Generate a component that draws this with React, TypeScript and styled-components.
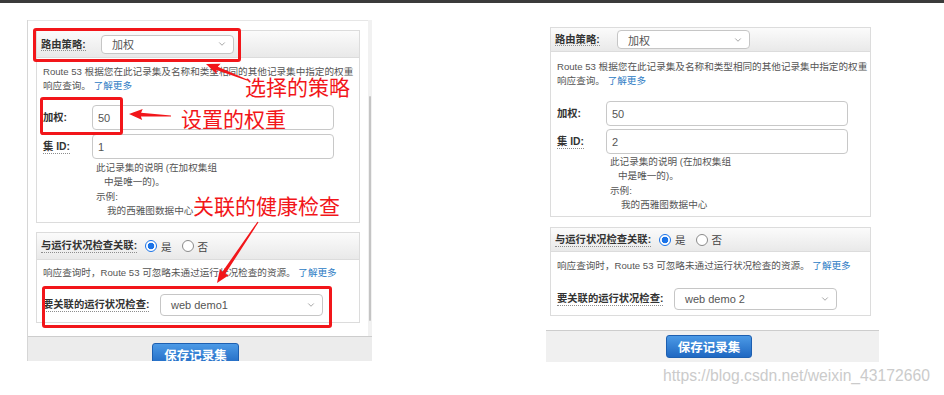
import React from "react";
import styled, { createGlobalStyle } from "styled-components";
import { ChevronDown } from "lucide-react";

const GlobalStyle = createGlobalStyle`
  html, body {
    margin: 0;
    padding: 0;
    background: #fff;
  }
  body {
    width: 944px;
    height: 395px;
    overflow: hidden;
    font-family: "Liberation Sans", "Noto Sans CJK SC", sans-serif;
  }
`;

interface Metrics {
  header: number;
  bodyTop: number;
  firstRow: number;
  secondRow: number;
  help: number;
  gap: number;
  body2Top: number;
  selectRow: number;
  body2Bottom: number;
}

const LEFT: Metrics = {
  header: 26,
  bodyTop: 7,
  firstRow: 12,
  secondRow: 4,
  help: 2,
  gap: 9,
  body2Top: 6,
  selectRow: 14,
  body2Bottom: 6,
};

const RIGHT: Metrics = {
  header: 23,
  bodyTop: 8,
  firstRow: 13,
  secondRow: 3,
  help: 1,
  gap: 10,
  body2Top: 7,
  selectRow: 15,
  body2Bottom: 5,
};

const Page = styled.div`
  position: relative;
  width: 944px;
  height: 395px;
`;

const TopBar = styled.div`
  height: 3px;
  background: #3b3b3b;
`;

const Stage = styled.div`
  display: flex;
  align-items: flex-start;
`;

/* left screenshot: framed, with a scrollbar */
const LeftShot = styled.div`
  margin: 17px 0 0 27px;
  width: 344px;
  border-left: 1px solid #d6d6d6;
  display: flex;
  flex-direction: column;
`;

const Viewport = styled.div`
  display: flex;
`;

const LeftContent = styled.div`
  flex: 1;
  border-top: 1px solid #e6e6e6;
  padding: 9px 8px 13px 8px;
`;

const ScrollTrack = styled.div`
  width: 5px;
  align-self: stretch;
  background: #f1f1f1;
`;

const ScrollThumb = styled.div`
  margin: 76px 1px 0;
  height: 225px;
  background: #c4c4c4;
  border-radius: 1px;
`;

/* right screenshot */
const RightShot = styled.div`
  margin: 24px 0 0 174px;
  width: 333px;
  display: flex;
  flex-direction: column;
`;

const RightContent = styled.div`
  padding: 0 8px 14px 4px;
`;

const Box = styled.div<{ $gap?: number }>`
  border: 1px solid #dcdcdc;
  background: #fff;
  margin-top: ${(p) => p.$gap ?? 0}px;
`;

const BoxHeader = styled.div<{ $h: number }>`
  height: ${(p) => p.$h}px;
  display: flex;
  align-items: center;
  padding-left: 4px;
  background: linear-gradient(#fbfbfb, #e9e9e9);
  border-bottom: 1px solid #dcdcdc;
`;

const Label = styled.span<{ $plain?: boolean }>`
  font-size: 10.3px;
  font-weight: 700;
  color: #333;
  line-height: 13px;
  white-space: nowrap;
  border-bottom: 1px dotted ${(p) => (p.$plain ? "transparent" : "#8d8d8d")};
  justify-self: start;
`;

const HeaderLabel = styled(Label)<{ $space: number }>`
  width: 58px;
  margin-right: ${(p) => p.$space}px;
  border-bottom: none;
  span {
    border-bottom: 1px dotted #8d8d8d;
  }
`;

const Select = styled.div<{ $w: number; $h: number }>`
  box-sizing: border-box;
  width: ${(p) => p.$w}px;
  height: ${(p) => p.$h}px;
  display: flex;
  align-items: center;
  justify-content: space-between;
  padding: 0 6px 0 10px;
  background: #fff;
  border: 1px solid #c6c6c6;
  border-radius: 4px;
  font-size: 11px;
  color: #555;
  svg {
    color: #888;
  }
`;

const Body = styled.div<{ $top: number; $bottom: number }>`
  padding: ${(p) => p.$top}px 6px ${(p) => p.$bottom}px 6px;
`;

const Desc = styled.div`
  font-size: 9.6px;
  line-height: 14px;
  color: #555;
  white-space: nowrap;
`;

const Link = styled.a`
  color: #2b7bc4;
  text-decoration: none;
`;

const FieldRow = styled.div<{ $top: number; $cols: string }>`
  display: grid;
  grid-template-columns: ${(p) => p.$cols};
  align-items: center;
  margin-top: ${(p) => p.$top}px;
`;

const TextInput = styled.input`
  box-sizing: border-box;
  width: 242px;
  height: 25px;
  margin: 0;
  padding: 0 5px;
  border: 1px solid #c8c8c8;
  border-radius: 4px;
  font-family: "Liberation Sans", sans-serif;
  font-size: 11px;
  color: #555;
  outline: none;
`;

const Help = styled.div<{ $top: number }>`
  margin-top: ${(p) => p.$top}px;
  padding-left: 53px;
  font-size: 9.6px;
  line-height: 14.3px;
  color: #555;
  white-space: nowrap;
`;

const HelpLine = styled.div<{ $indent?: number }>`
  padding-left: ${(p) => p.$indent ?? 0}px;
`;

const RadioGroup = styled.div`
  display: flex;
  align-items: center;
  margin-left: 8px;
`;

const RadioOption = styled.label`
  display: inline-flex;
  align-items: center;
  gap: 4px;
  margin-right: 10px;
  font-size: 10.5px;
  color: #444;
`;

const RadioDot = styled.span<{ $checked?: boolean }>`
  box-sizing: border-box;
  width: 12px;
  height: 12px;
  border-radius: 50%;
  border: 1px solid ${(p) => (p.$checked ? "#1a73e8" : "#8a8a8a")};
  background: ${(p) =>
    p.$checked ? "radial-gradient(circle, #1a73e8 0 3px, #fff 3.6px)" : "#fff"};
`;

const Footer = styled.div<{ $h: number; $pad: number; $shift: number; $bg: string }>`
  box-sizing: border-box;
  height: ${(p) => p.$h}px;
  padding-top: ${(p) => p.$pad}px;
  padding-right: ${(p) => p.$shift}px;
  display: flex;
  justify-content: center;
  overflow: hidden;
  background: ${(p) => p.$bg};
  border-top: 1px solid #cdcdcd;
`;

const SaveButton = styled.button<{ $w: number }>`
  box-sizing: border-box;
  flex: none;
  width: ${(p) => p.$w}px;
  height: 23px;
  padding: 0;
  border: 1px solid #1d5fb0;
  border-radius: 3px;
  background: linear-gradient(#4c9ae6, #1f68c2);
  color: #fff;
  font-family: "Liberation Sans", "Noto Sans CJK SC", sans-serif;
  font-size: 12.5px;
  font-weight: 700;
`;

const Watermark = styled.div`
  position: absolute;
  left: 663px;
  top: 367px;
  font-family: "Liberation Sans", sans-serif;
  font-size: 15.7px;
  color: #cbcbcb;
  white-space: nowrap;
`;

/* red annotations drawn over the left screenshot */
const RedBox = styled.div<{ $x: number; $y: number; $w: number; $h: number }>`
  position: absolute;
  left: ${(p) => p.$x}px;
  top: ${(p) => p.$y}px;
  width: ${(p) => p.$w}px;
  height: ${(p) => p.$h}px;
  box-sizing: border-box;
  border: 3px solid #f2161a;
  border-radius: 3px;
  pointer-events: none;
`;

const RedNote = styled.span<{ $x: number; $y: number }>`
  position: absolute;
  left: ${(p) => p.$x}px;
  top: ${(p) => p.$y}px;
  font-family: "Noto Sans CJK SC", sans-serif;
  font-size: 21px;
  line-height: 21px;
  color: #f2161a;
  white-space: nowrap;
`;

const ArrowLayer = styled.svg`
  position: absolute;
  left: 0;
  top: 0;
  pointer-events: none;
`;

function arrowPoints(x1: number, y1: number, x2: number, y2: number) {
  const len = Math.hypot(x2 - x1, y2 - y1);
  const dx = (x2 - x1) / len;
  const dy = (y2 - y1) / len;
  const nx = -dy;
  const ny = dx;
  const head = 12;
  const bx = x2 - dx * head;
  const by = y2 - dy * head;
  const pts: [number, number][] = [
    [x1 + nx * 0.6, y1 + ny * 0.6],
    [bx + nx * 1.8, by + ny * 1.8],
    [bx - dx * 1.5 + nx * 5.5, by - dy * 1.5 + ny * 5.5],
    [x2, y2],
    [bx - dx * 1.5 - nx * 5.5, by - dy * 1.5 - ny * 5.5],
    [bx - nx * 1.8, by - ny * 1.8],
    [x1 - nx * 0.6, y1 - ny * 0.6],
  ];
  return pts.map(([x, y]) => `${x.toFixed(1)},${y.toFixed(1)}`).join(" ");
}

function Chevron() {
  return <ChevronDown size={10} strokeWidth={1.8} />;
}

interface FormProps {
  m: Metrics;
  labelSpace: number;
  weight: string;
  setId: string;
  check: string;
}

function RecordForm({ m, labelSpace, weight, setId, check }: FormProps) {
  return (
    <>
      <Box>
        <BoxHeader $h={m.header}>
          <HeaderLabel $space={labelSpace}>
            <span>路由策略:</span>
          </HeaderLabel>
          <Select $w={133} $h={19}>
            加权
            <Chevron />
          </Select>
        </BoxHeader>
        <Body $top={m.bodyTop} $bottom={4}>
          <Desc>
            Route 53 根据您在此记录集及名称和类型相同的其他记录集中指定的权重
            <br />
            响应查询。 <Link>了解更多</Link>
          </Desc>
          <FieldRow $top={m.firstRow} $cols="49px 242px">
            <Label $plain>加权:</Label>
            <TextInput readOnly value={weight} />
          </FieldRow>
          <FieldRow $top={m.secondRow} $cols="49px 242px">
            <Label>集 ID:</Label>
            <TextInput readOnly value={setId} />
          </FieldRow>
          <Help $top={m.help}>
            <HelpLine>此记录集的说明 (在加权集组</HelpLine>
            <HelpLine $indent={8}>中是唯一的)。</HelpLine>
            <HelpLine>示例:</HelpLine>
            <HelpLine $indent={11}>我的西雅图数据中心</HelpLine>
          </Help>
        </Body>
      </Box>
      <Box $gap={m.gap}>
        <BoxHeader $h={m.header}>
          <Label>与运行状况检查关联:</Label>
          <RadioGroup>
            <RadioOption>
              <RadioDot $checked />是
            </RadioOption>
            <RadioOption>
              <RadioDot />否
            </RadioOption>
          </RadioGroup>
        </BoxHeader>
        <Body $top={m.body2Top} $bottom={m.body2Bottom}>
          <Desc>
            响应查询时，Route 53 可忽略未通过运行状况检查的资源。 <Link>了解更多</Link>
          </Desc>
          <FieldRow $top={m.selectRow} $cols="117px 163px">
            <Label>要关联的运行状况检查:</Label>
            <Select $w={163} $h={22}>
              {check}
              <Chevron />
            </Select>
          </FieldRow>
        </Body>
      </Box>
    </>
  );
}

function App() {
  return (
    <Page>
      <GlobalStyle />
      <TopBar />
      <Stage>
        <LeftShot>
          <Viewport>
            <LeftContent>
              <RecordForm m={LEFT} labelSpace={2} weight="50" setId="1" check="web demo1" />
            </LeftContent>
            <ScrollTrack>
              <ScrollThumb />
            </ScrollTrack>
          </Viewport>
          <Footer $h={25} $pad={6} $shift={9} $bg="#ececec">
            <SaveButton $w={87}>保存记录集</SaveButton>
          </Footer>
        </LeftShot>
        <RightShot>
          <RightContent>
            <RecordForm m={RIGHT} labelSpace={4} weight="50" setId="2" check="web demo 2" />
          </RightContent>
          <Footer $h={32} $pad={4} $shift={7} $bg="#f0f0f0">
            <SaveButton $w={86}>保存记录集</SaveButton>
          </Footer>
        </RightShot>
      </Stage>

      <RedBox $x={33} $y={28} $w={208} $h={34} />
      <RedBox $x={40} $y={97} $w={83} $h={38} />
      <RedBox $x={42} $y={286} $w={290} $h={42} />
      <RedNote $x={245} $y={76}>选择的策略</RedNote>
      <RedNote $x={181} $y={108}>设置的权重</RedNote>
      <RedNote $x={193} $y={195}>关联的健康检查</RedNote>
      <ArrowLayer width={944} height={395}>
        <polygon points={arrowPoints(247, 80, 206, 64)} fill="#f2161a" />
        <polygon points={arrowPoints(171, 116, 129, 114)} fill="#f2161a" />
        <polygon points={arrowPoints(258, 222, 217, 283)} fill="#f2161a" />
      </ArrowLayer>

      <Watermark>https://blog.csdn.net/weixin_43172660</Watermark>
    </Page>
  );
}

export default App;
